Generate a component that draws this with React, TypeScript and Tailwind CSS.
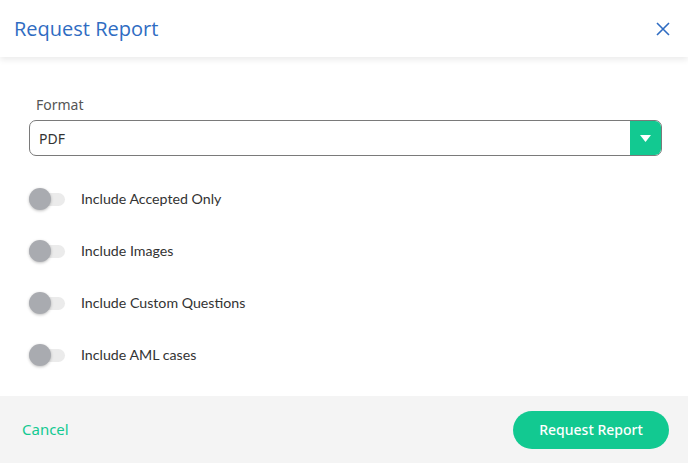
import React, { useState } from 'react';

const options = [
  'Include Accepted Only',
  'Include Images',
  'Include Custom Questions',
  'Include AML cases',
];

const Toggle: React.FC<{ on: boolean; onClick: () => void }> = ({ on, onClick }) => (
  <button
    type="button"
    onClick={onClick}
    className="relative flex h-[22px] w-[38px] shrink-0 items-center"
  >
    <span className={`block h-[13px] w-[36px] rounded-full ${on ? 'bg-[#9be8cf]' : 'bg-[#ebebeb]'}`} />
    <span
      className={`absolute top-0 h-[22px] w-[22px] rounded-full shadow-[0_1px_3px_rgba(0,0,0,0.25)] ${
        on ? 'left-[16px] bg-[#12c991]' : 'left-0 bg-[#a9abb0]'
      }`}
    />
  </button>
);

const App: React.FC = () => {
  const [checked, setChecked] = useState<boolean[]>([false, false, false, false]);

  return (
    <div className="flex h-[463px] w-[688px] flex-col bg-white font-['Noto_Sans',sans-serif]">
      <div className="flex h-[57px] items-center justify-between pl-[14px] pr-[18px] shadow-[0_3px_6px_rgba(0,0,0,0.08)]">
        <h2 className="text-[20px] text-[#2f6cc2] font-['Open_Sans',sans-serif]">Request Report</h2>
        <button type="button" className="text-[#2f6cc2]">
          <svg width="14" height="14" viewBox="0 0 14 14" fill="none" stroke="currentColor" strokeWidth="1.6">
            <path d="M1 1L13 13M13 1L1 13" />
          </svg>
        </button>
      </div>

      <div className="flex flex-1 flex-col pl-[29px] pr-[26px] pt-[37px]">
        <label className="pl-[7px] text-[14px] text-[#555]">Format</label>
        <div className="mt-[5px] flex h-[36px] items-stretch overflow-hidden rounded-[7px] border border-[#7a7a7a]">
          <div className="flex flex-1 items-center pl-[9px] text-[14px] text-[#333]">PDF</div>
          <div className="flex w-[31px] items-center justify-center bg-[#12c991]">
            <svg width="11" height="7" viewBox="0 0 11 7">
              <path d="M0 0H11L5.5 7Z" fill="white" />
            </svg>
          </div>
        </div>

        <div className="mt-[32px] flex flex-col gap-[30px] font-['Lato',sans-serif]">
          {options.map((label, i) => (
            <div key={label} className="flex items-center gap-[14px]">
              <Toggle
                on={checked[i]}
                onClick={() => setChecked(checked.map((c, j) => (j === i ? !c : c)))}
              />
              <span className="text-[14.2px] text-[#333]">{label}</span>
            </div>
          ))}
        </div>
      </div>

      <div className="flex h-[67px] items-center justify-between bg-[#f4f4f4] pl-[22px] pr-[19px]">
        <button type="button" className="text-[15px] text-[#12c991]">Cancel</button>
        <button
          type="button"
          className="h-[38px] w-[156px] rounded-full bg-[#12c991] text-[14px] font-medium text-white"
        >
          Request Report
        </button>
      </div>
    </div>
  );
};

export default App;
